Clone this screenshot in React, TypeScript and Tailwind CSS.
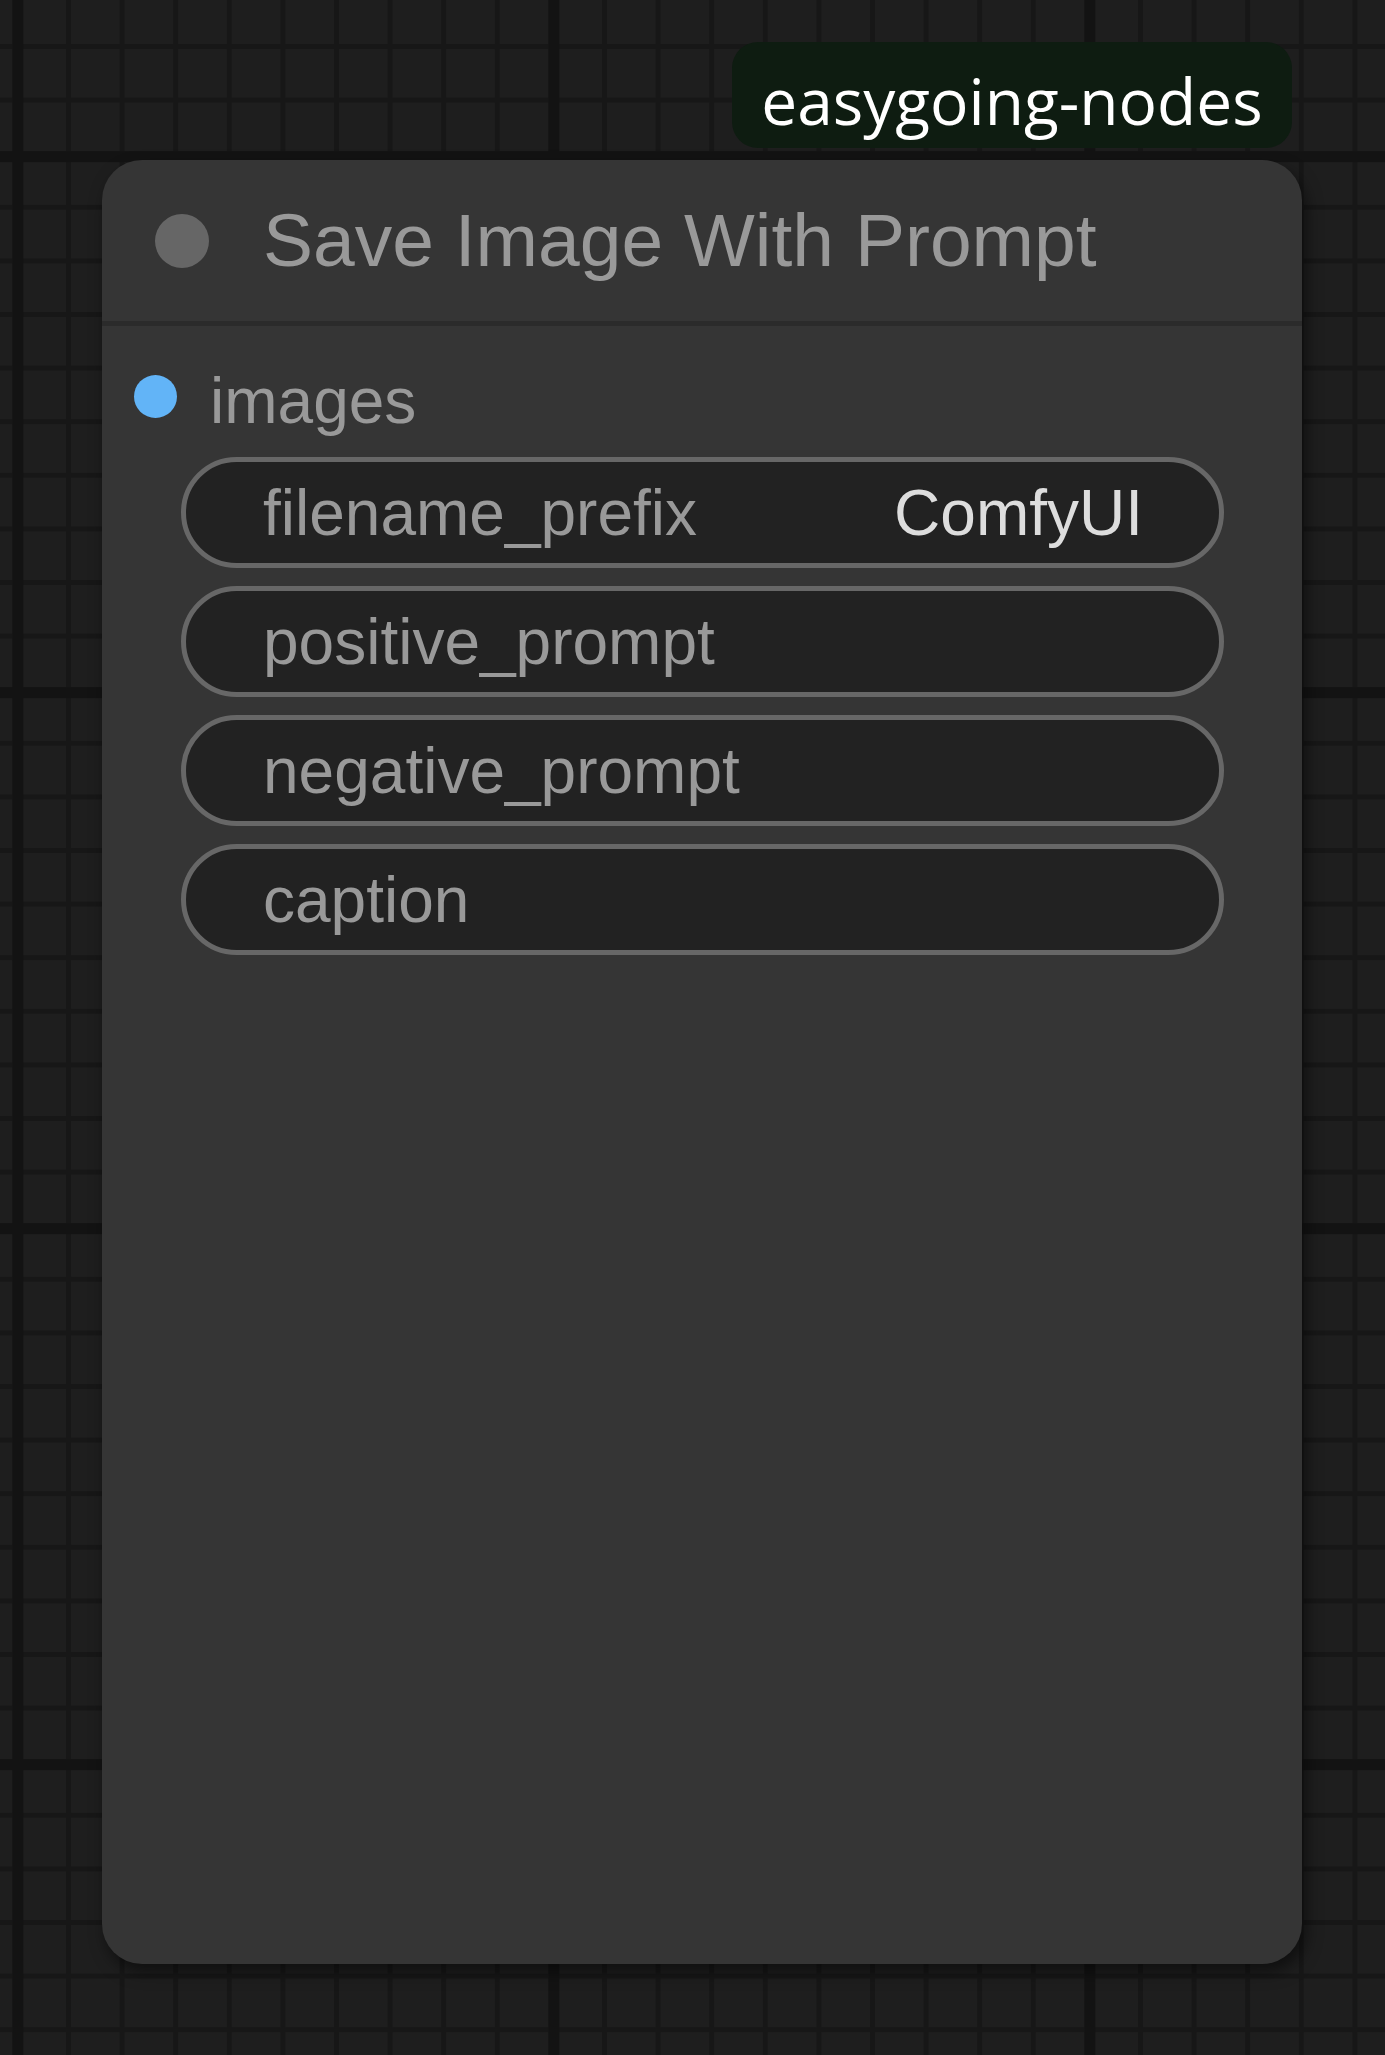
const widgets = [
  { name: "filename_prefix", value: "ComfyUI" },
  { name: "positive_prompt", value: "" },
  { name: "negative_prompt", value: "" },
  { name: "caption", value: "" },
];

function CanvasGrid() {
  // litegraph style grid: thin lines every 53.6px, thick ones every 10 cells
  return (
    <svg className="absolute inset-0 h-full w-full" aria-hidden="true">
      <defs>
        <pattern id="minor" patternUnits="userSpaceOnUse" x="12.4" y="151.2" width="53.6" height="53.6">
          <rect x="0" y="0" width="5" height="53.6" fill="#171717" />
          <rect x="0" y="0" width="53.6" height="5" fill="#171717" />
        </pattern>
        <pattern id="major" patternUnits="userSpaceOnUse" x="12.4" y="151.2" width="536" height="536">
          <rect x="0" y="0" width="11" height="536" fill="#131313" />
          <rect x="0" y="0" width="536" height="11" fill="#131313" />
        </pattern>
      </defs>
      <rect width="100%" height="100%" fill="#1e1e1e" />
      <rect width="100%" height="100%" fill="url(#minor)" />
      <rect width="100%" height="100%" fill="url(#major)" />
    </svg>
  );
}

function Widget({ name, value }: { name: string; value: string }) {
  return (
    <div className="flex h-[111px] items-center justify-between rounded-full border-[5px] border-[#676767] bg-[#222222] pl-[77px] pr-[76px]">
      <span className="text-[64px] leading-none text-[#999999]">{name}</span>
      {value && <span className="text-[64px] leading-none text-[#dddddd]">{value}</span>}
    </div>
  );
}

export default function App() {
  return (
    <div className="relative h-[2055px] w-full overflow-hidden bg-[#1e1e1e]">
      <CanvasGrid />

      <div className="relative ml-[102px] flex w-[1200px] flex-col pt-[42px]">
        {/* node source badge */}
        <div className="mr-[10px] flex h-[106px] w-[560px] items-center justify-center self-end rounded-[26px] bg-[#0e1c11] pt-[12px] font-['Open_Sans',sans-serif] text-[64px] leading-none text-white">
          easygoing-nodes
        </div>

        {/* node */}
        <div className="mt-[12px] flex h-[1804px] flex-col overflow-hidden rounded-[40px] bg-[#353535] font-['Liberation_Sans',Arial,sans-serif] shadow-[4px_8px_16px_rgba(0,0,0,0.5)]">
          <div className="flex h-[166px] shrink-0 items-center gap-[54px] border-b-[5px] border-[#2b2b2b] pl-[53px]">
            <span className="h-[54px] w-[54px] rounded-full bg-[#666666]" />
            <span className="text-[75px] leading-none text-[#999999]">Save Image With Prompt</span>
          </div>

          <div className="flex flex-col pt-[39px]">
            <div className="flex h-[72px] items-center gap-[33px] pl-[32px]">
              <span className="mb-[10px] h-[43px] w-[43px] rounded-full bg-[#62b4f7]" />
              <span className="text-[64px] leading-none text-[#999999]">images</span>
            </div>

            <div className="ml-[79px] mr-[78px] mt-[20px] flex flex-col gap-[18px]">
              {widgets.map((w) => (
                <Widget key={w.name} name={w.name} value={w.value} />
              ))}
            </div>
          </div>
        </div>
      </div>
    </div>
  );
}
